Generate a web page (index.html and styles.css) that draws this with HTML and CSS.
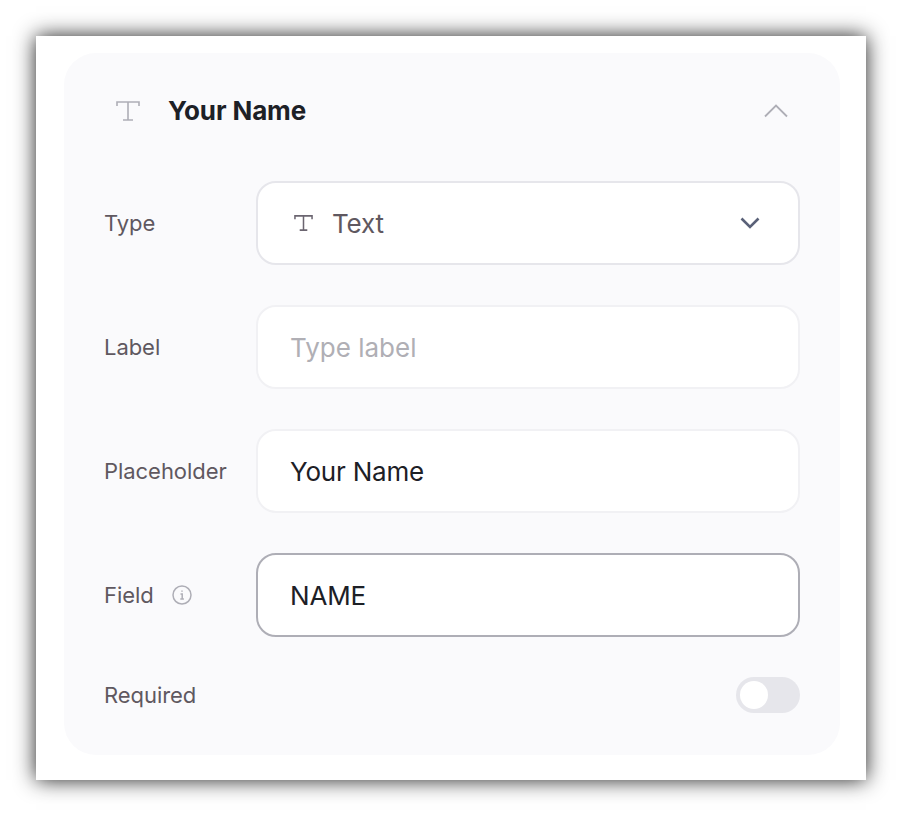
FILE: index.html
```html
<!DOCTYPE html>
<html lang="en">
<head>
<meta charset="utf-8">
<title>Your Name</title>
<link rel="stylesheet" href="styles.css">
</head>
<body>
<main class="sheet">
  <section class="card">
    <header class="head">
      <svg class="head-t" viewBox="0 0 24 22" fill="none" stroke="#aeaeb6" stroke-width="1.6"><path d="M1 6V2h22v4M12 2v18M7 20h10"/></svg>
      <h2 class="title">Your Name</h2>
      <svg class="head-chev" viewBox="0 0 24 14" fill="none" stroke="#aeaeb6" stroke-width="1.8"><path d="M1 12.5 12 1.5l11 11"/></svg>
    </header>
    <div class="row">
      <span class="label">Type</span>
      <div class="box select">
        <svg class="sel-t" viewBox="0 0 20 18" fill="none" stroke="#6b6570" stroke-width="1.6"><path d="M1 5V1.500h18V5M10 1.500v15M6 16.500h8"/></svg>
        <span class="val-muted">Text</span>
        <svg class="sel-chev" viewBox="0 0 20 12" fill="none" stroke="#5a6178" stroke-width="2.600"><path d="M1.500 1.500 10 10l8.500-8.500"/></svg>
      </div>
    </div>
    <div class="row">
      <span class="label">Label</span>
      <div class="box soft"><span class="val-ph">Type label</span></div>
    </div>
    <div class="row">
      <span class="label">Placeholder</span>
      <div class="box soft"><span class="val">Your Name</span></div>
    </div>
    <div class="row">
      <span class="label">Field
        <svg class="info" viewBox="0 0 20 20" fill="none" stroke="#aeaeb6" stroke-width="1.500"><circle cx="10" cy="10" r="9"/><path d="M8.500 9h1.700v5M8.300 14h3.600M10 5.500v1.300"/></svg>
      </span>
      <div class="box focus"><span class="val">NAME</span></div>
    </div>
    <div class="row-toggle">
      <span class="label">Required</span>
      <div class="toggle"><span class="knob"></span></div>
    </div>
  </section>
</main>
</body>
</html>
```
FILE: styles.css
```css
* { box-sizing: border-box; }
html, body { margin: 0; background: #fff; }
body {
  width: 902px;
  height: 816px;
  padding: 36px;
  font-family: Inter, "Liberation Sans", sans-serif;
  overflow: hidden;
}
.sheet {
  width: 830px;
  height: 744px;
  background: #fff;
  padding: 17px 26px 25px 28px;
  box-shadow: 0 0 20px rgba(0,0,0,.88);
}
.card {
  height: 702px;
  background: #fafafc;
  border-radius: 32px;
  padding: 0 40px;
}
.head {
  height: 128px;
  display: flex;
  align-items: center;
  padding-bottom: 13px;
}
.head-t { width: 24px; height: 22px; margin-left: 12px; }
.title {
  margin: 0 0 0 28px;
  font-size: 26px;
  font-weight: 700;
  letter-spacing: -0.12px;
  color: #1d2026;
}
.head-chev { width: 24px; height: 14px; margin-left: auto; margin-right: 12px; }
.row {
  display: flex;
  align-items: center;
  margin-bottom: 40px;
}
.label {
  width: 152px;
  flex: none;
  font-size: 22px;
  letter-spacing: -0.05px;
  color: #5f5860;
  display: flex;
  align-items: center;
}
.info { width: 20px; height: 20px; margin-left: 18px; }
.box {
  flex: 1;
  height: 84px;
  background: #fff;
  border-radius: 20px;
  display: flex;
  align-items: center;
  padding: 0 32px;
  font-size: 26px;
  letter-spacing: -0.2px;
}
.select { border: 2px solid #e6e6eb; }
.soft { border: 2px solid #f1f1f4; }
.focus { border: 2px solid #aeaeb6; }
.sel-t { width: 19px; height: 18px; margin: -1px 19px 0 4px; }
.sel-chev { width: 20px; height: 12px; margin-left: auto; margin-right: 6px; }
.val { color: #1d2026; }
.val-muted { color: #5f5860; }
.val-ph { color: #b0afb5; letter-spacing: 0; }
.row-toggle {
  display: flex;
  align-items: center;
  justify-content: space-between;
  margin-top: 2px;
}
.toggle {
  width: 64px;
  height: 36px;
  border-radius: 18px;
  background: #e6e6eb;
  padding: 4px;
}
.knob {
  display: block;
  width: 28px;
  height: 28px;
  border-radius: 50%;
  background: #fff;
}
```
